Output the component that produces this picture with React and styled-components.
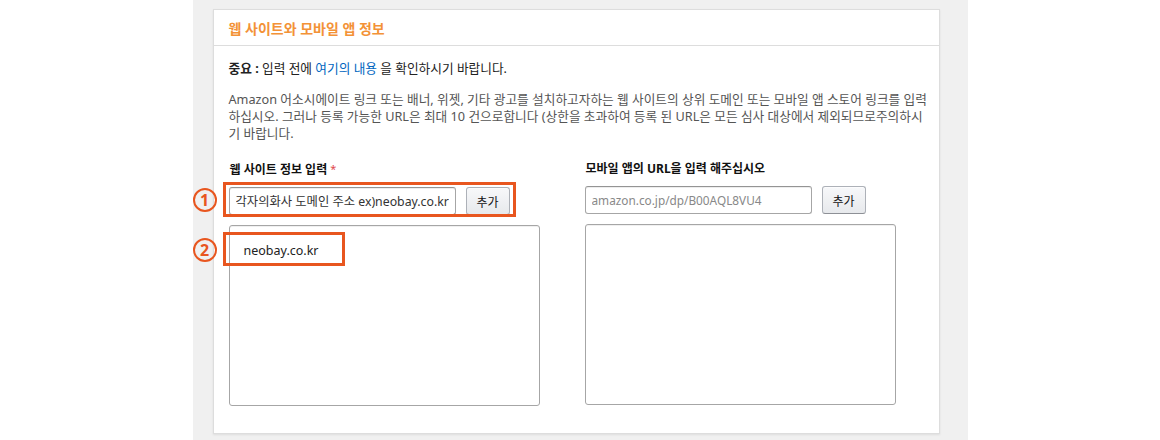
import React from "react";
import styled, { createGlobalStyle } from "styled-components";

const GlobalStyle = createGlobalStyle`
  html, body {
    margin: 0;
    padding: 0;
    background: #fff;
  }
  body {
    font-family: "Noto Sans", "Noto Sans CJK KR", sans-serif;
    color: #333;
  }
`;

const Backdrop = styled.div`
  width: 775px;
  height: 440px;
  margin: 0 auto;
  background: #f0f0f0;
  padding: 9px 28px 0 20px;
  box-sizing: border-box;
`;

const Panel = styled.section`
  background: #fff;
  border: 1px solid #ddd;
  box-shadow: 0 1px 2px rgba(0, 0, 0, 0.08);
  height: 425px;
  box-sizing: border-box;
`;

const PanelHeader = styled.header`
  height: 35px;
  display: flex;
  align-items: center;
  padding: 0 15px;
  border-bottom: 1px solid #ddd;
`;

const Title = styled.h3`
  margin: 0;
  font-size: 14px;
  font-weight: 700;
  color: #f39237;
`;

const PanelBody = styled.div`
  padding: 14px 15px 0;
`;

const Notice = styled.p`
  margin: 0;
  font-size: 12.7px;
  line-height: 17px;
  color: #222;
  strong {
    font-weight: 700;
  }
`;

const Link = styled.a`
  color: #0066c0;
  text-decoration: none;
`;

const Description = styled.p`
  margin: 14px 0 0;
  font-size: 12.7px;
  line-height: 17px;
  color: #555;
  width: 700px;
`;

const Columns = styled.div`
  display: grid;
  grid-template-columns: 311px 311px;
  column-gap: 45px;
  margin-top: 18px;
`;

const Column = styled.div`
  position: relative;
  display: flex;
  flex-direction: column;
`;

const Label = styled.label`
  font-size: 12px;
  font-weight: 700;
  line-height: 17px;
  color: #111;
  margin-left: 1px;
`;

const Required = styled.span`
  color: #e0474c;
  font-weight: 400;
  font-size: 11px;
  margin-left: 3px;
  vertical-align: 1px;
`;

const InputRow = styled.div`
  display: flex;
  align-items: center;
  gap: 10px;
  margin-top: 9px;
`;

const TextInput = styled.input`
  width: 227px;
  height: 28px;
  box-sizing: border-box;
  padding: 0 6px;
  border: 1px solid #a6a6a6;
  border-top-color: #949494;
  border-radius: 3px;
  box-shadow: 0 1px 0 rgba(255, 255, 255, 0.5), inset 0 1px 0 rgba(0, 0, 0, 0.07);
  font-family: "Noto Sans", "Noto Sans CJK KR", sans-serif;
  font-size: 12.3px;
  color: #333;
  outline: none;
  &::placeholder {
    color: #888;
    font-size: 11.8px;
  }
`;

const AddButton = styled.button`
  width: 44px;
  height: 28px;
  box-sizing: border-box;
  border: 1px solid #adb1b8;
  border-bottom-color: #8d9096;
  border-radius: 3px;
  background: linear-gradient(to bottom, #f7f8fa, #e7e9ec);
  box-shadow: inset 0 1px 0 rgba(255, 255, 255, 0.6);
  font-family: "Noto Sans CJK KR", sans-serif;
  font-size: 12px;
  color: #111;
  padding: 0;
`;

const ListBox = styled.div`
  margin-top: 10px;
  width: 311px;
  height: 181px;
  box-sizing: border-box;
  border: 1px solid #a6a6a6;
  border-radius: 3px;
  box-shadow: inset 0 1px 0 rgba(0, 0, 0, 0.06);
  padding: 15px 14px;
  font-size: 12.5px;
  line-height: 20px;
  color: #222;
`;

const Highlight = styled.div`
  position: absolute;
  left: ${(p) => p.$left}px;
  top: ${(p) => p.$top}px;
  width: ${(p) => p.$width}px;
  height: ${(p) => p.$height}px;
  border: 3px solid #e8561f;
  box-sizing: border-box;
  pointer-events: none;
`;

const Marker = styled.span`
  position: absolute;
  left: -36px;
  top: ${(p) => p.$top}px;
  width: 24px;
  height: 24px;
  box-sizing: border-box;
  border: 2.5px solid #e8561f;
  border-radius: 50%;
  display: flex;
  align-items: center;
  justify-content: center;
  color: #e8561f;
  font-family: "Noto Sans", sans-serif;
  font-weight: 700;
  font-size: 16px;
  line-height: 1;
`;

export default function App() {
  return (
    <>
      <GlobalStyle />
      <Backdrop>
        <Panel>
          <PanelHeader>
            <Title>웹 사이트와 모바일 앱 정보</Title>
          </PanelHeader>
          <PanelBody>
            <Notice>
              <strong>중요 :</strong> 입력 전에 <Link href="#">여기의 내용</Link> 을 확인하시기 바랍니다.
            </Notice>
            <Description>
              Amazon 어소시에이트 링크 또는 배너, 위젯, 기타 광고를 설치하고자하는 웹 사이트의 상위 도메인 또는 모바일 앱 스토어 링크를 입력하십시오. 그러나 등록 가능한 URL은 최대 10 건으로합니다 (상한을 초과하여 등록 된 URL은 모든 심사 대상에서 제외되므로주의하시기 바랍니다.
            </Description>
            <Columns>
              <Column>
                <Label>
                  웹 사이트 정보 입력<Required>*</Required>
                </Label>
                <InputRow>
                  <TextInput defaultValue="각자의화사 도메인 주소 ex)neobay.co.kr" />
                  <AddButton>추가</AddButton>
                </InputRow>
                <ListBox>neobay.co.kr</ListBox>
                <Highlight $left={-6} $top={22} $width={293} $height={35} />
                <Highlight $left={-6} $top={72} $width={122} $height={34} />
                <Marker $top={28}>1</Marker>
                <Marker $top={78}>2</Marker>
              </Column>
              <Column>
                <Label>모바일 앱의 URL을 입력 해주십시오</Label>
                <InputRow>
                  <TextInput placeholder="amazon.co.jp/dp/B00AQL8VU4" />
                  <AddButton>추가</AddButton>
                </InputRow>
                <ListBox />
              </Column>
            </Columns>
          </PanelBody>
        </Panel>
      </Backdrop>
    </>
  );
}
